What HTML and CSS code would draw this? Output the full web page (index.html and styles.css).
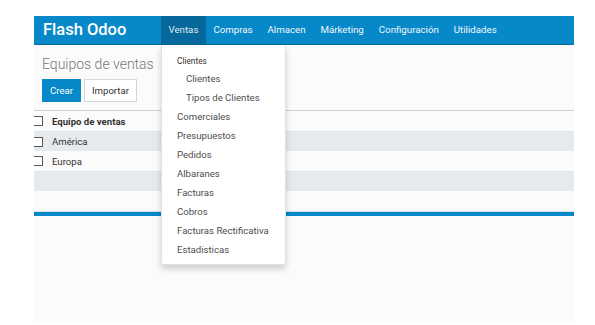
FILE: index.html
```html
<!DOCTYPE html>
<html>
<head>
<meta charset="utf-8">
<link rel="stylesheet" href="styles.css">
</head>
<body>
<div class="page">
  <nav class="navbar">
    <div class="brand">Flash Odoo</div>
    <ul class="menu">
      <li class="menu-item active">Ventas</li>
      <li class="menu-item">Compras</li>
      <li class="menu-item">Almacen</li>
      <li class="menu-item">Márketing</li>
      <li class="menu-item">Configuración</li>
      <li class="menu-item">Utilidades</li>
    </ul>
  </nav>
  <div class="dropdown">
    <div class="dd-header">Clientes</div>
    <div class="dd-item sub">Clientes</div>
    <div class="dd-item sub">Tipos de Clientes</div>
    <div class="dd-item">Comerciales</div>
    <div class="dd-item">Presupuestos</div>
    <div class="dd-item">Pedidos</div>
    <div class="dd-item">Albaranes</div>
    <div class="dd-item">Facturas</div>
    <div class="dd-item">Cobros</div>
    <div class="dd-item">Facturas Rectificativa</div>
    <div class="dd-item">Estadisticas</div>
  </div>
  <div class="control-panel">
    <h1 class="title">Equipos de ventas</h1>
    <div class="buttons">
      <button class="btn btn-primary">Crear</button>
      <button class="btn btn-default">Importar</button>
    </div>
  </div>
  <div class="list">
    <div class="row head"><span class="check"></span><span class="cell">Equipo de ventas</span></div>
    <div class="row odd"><span class="check"></span><span class="cell">América</span></div>
    <div class="row"><span class="check"></span><span class="cell">Europa</span></div>
    <div class="row odd"></div>
    <div class="row"></div>
  </div>
  <div class="footer-bar"></div>
</div>
</body>
</html>
```
FILE: styles.css
```css
* { box-sizing: border-box; }
html, body { margin: 0; padding: 0; background: #ffffff; }
body { font-family: Roboto, "Noto Sans", sans-serif; }

.page {
  position: relative;
  margin: 16px 0 0 34px;
  width: 540px;
  height: 308px;
  background: #fbfbfb;
  overflow: hidden;
}

.navbar {
  display: flex;
  align-items: stretch;
  height: 29px;
  background: #0789c9;
  border-bottom: 1px solid #05679a;
}
.brand {
  width: 127px;
  padding-left: 9px;
  color: #fff;
  font-size: 16.5px;
  font-weight: 500;
  line-height: 28px;
}
.menu {
  display: flex;
  margin: 0;
  padding: 0;
  list-style: none;
}
.menu-item {
  padding: 0 7.5px;
  color: #f2f7fb;
  font-size: 9.7px;
  line-height: 28px;
}
.menu-item.active {
  background: #07689b;
  color: #dfe8ee;
}

.dropdown {
  position: absolute;
  left: 127px;
  top: 29px;
  width: 125px;
  padding: 8px 0 5px;
  background: #fff;
  border: 1px solid #e2e2e2;
  border-top: none;
  box-shadow: 0 4px 6px rgba(0, 0, 0, 0.18);
  border-radius: 0 0 3px 3px;
  z-index: 2;
}
.dd-header {
  padding-left: 15px;
  font-size: 8.3px;
  color: #333;
  line-height: 16px;
}
.dd-item {
  padding-left: 15px;
  font-size: 9.6px;
  color: #4e4e4e;
  line-height: 19px;
}
.dd-item.sub { padding-left: 24px; }

.control-panel {
  padding: 10px 8px 8px;
}
.title {
  margin: 0;
  font-size: 14px;
  font-weight: 300;
  color: #777;
  line-height: 18px;
}
.buttons {
  display: flex;
  gap: 3px;
  margin-top: 6px;
}
.btn {
  height: 23px;
  padding: 0 7px;
  font-family: Roboto, sans-serif;
  font-size: 9.6px;
  border-radius: 0;
}
.btn-primary {
  background: #0789c9;
  color: #fff;
  border: 1px solid #0789c9;
}
.btn-default {
  background: #fff;
  color: #333;
  border: 1px solid #d6d6d6;
}

.list {
  border-top: 1px solid #cfcfcf;
}
.row {
  display: flex;
  align-items: center;
  height: 20px;
  background: #fbfbfb;
}
.row.odd { background: #e7eaed; border-top: 1px solid #e1e4e7; }
.row.head { font-weight: 700; }
.check {
  width: 11px;
  height: 10px;
  margin-left: -2px;
  border: 1px solid #555;
  background: #fff;
}
.cell {
  margin-left: 9px;
  font-size: 9.6px;
  color: #333;
}
.footer-bar {
  height: 5px;
  background: #0789c9;
  border-top: 1px solid #d9dde0;
}
```
